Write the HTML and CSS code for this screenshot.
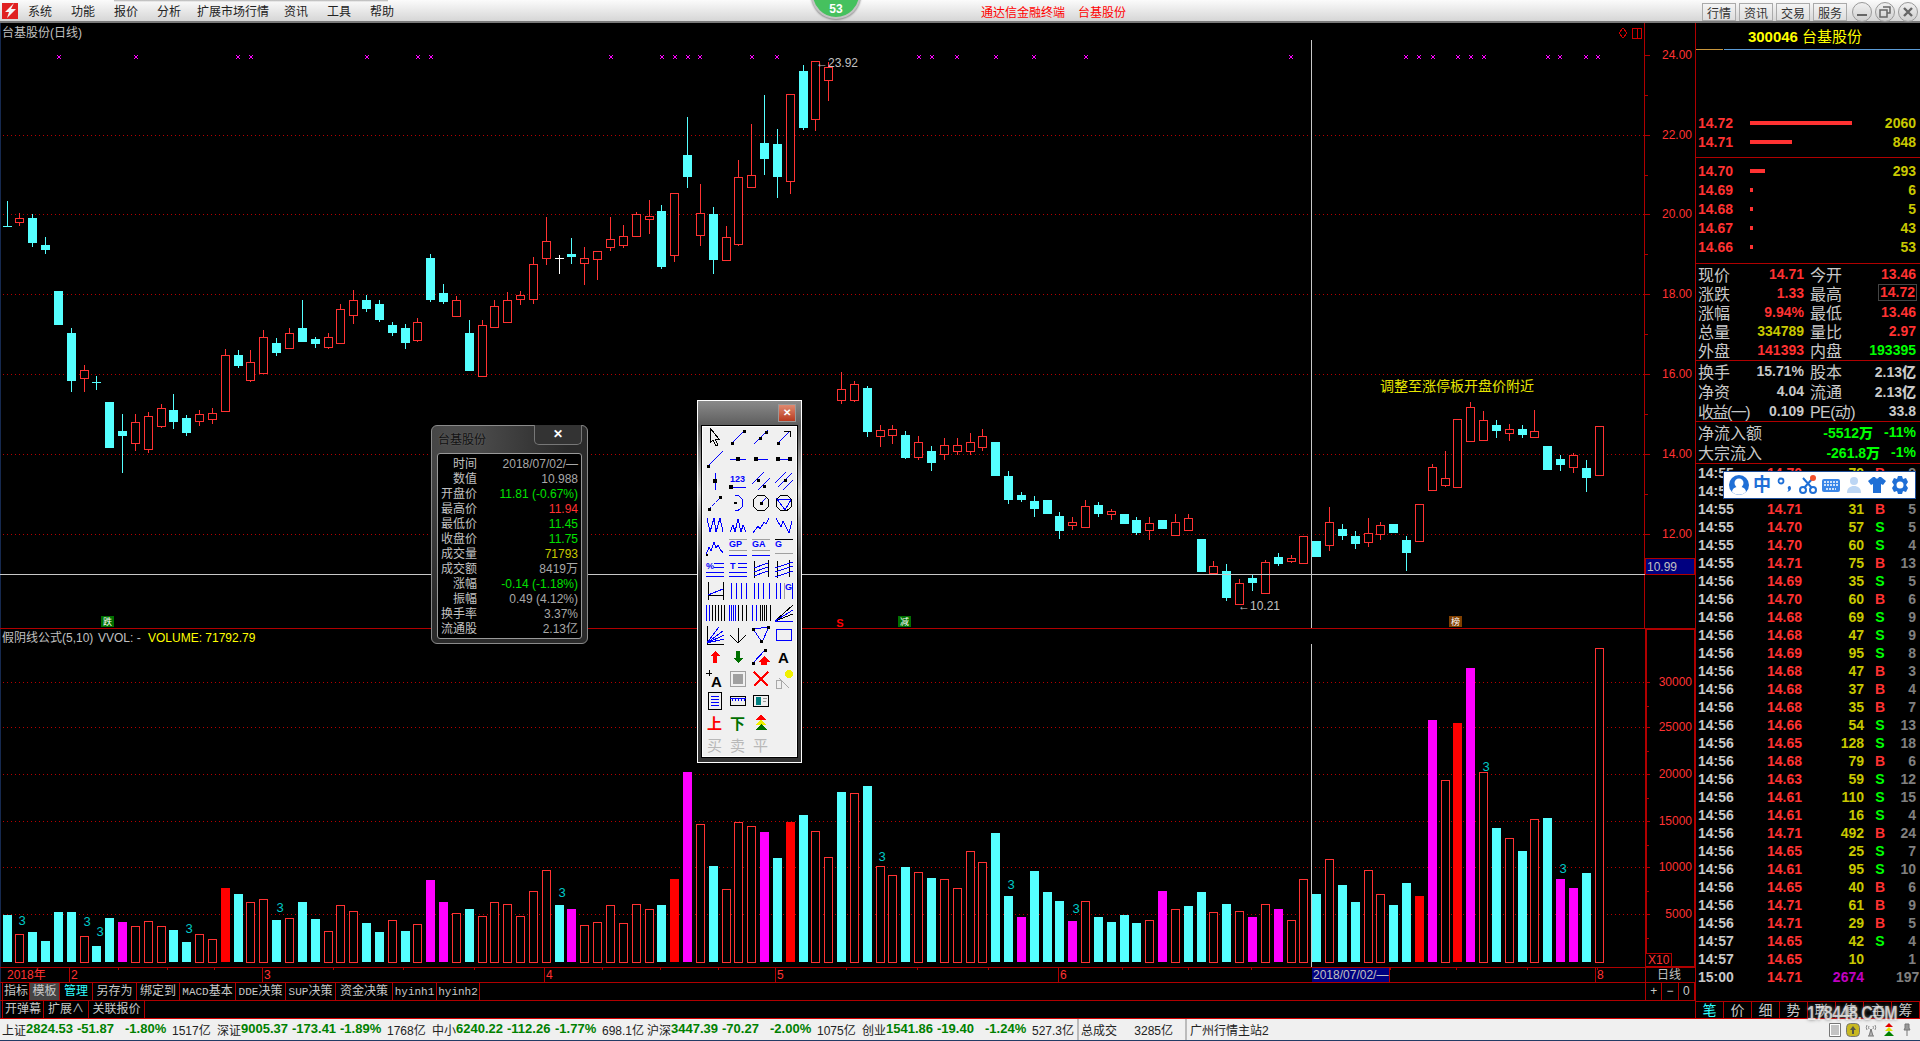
FILE: index.html
```html
<!DOCTYPE html>
<html lang="zh-CN">
<head>
    <meta charset="UTF-8">
    <title>通达信金融终端 台基股份</title>
    <link rel="stylesheet" href="styles.css">
</head>
<body>
    <header class="topbar">
        <svg class="logo" viewBox="0 0 16 16"><rect width="16" height="16" fill="#e02020"/><path d="M12 0 3 9l4 0-2 6 9-9H9l3-6z" fill="#f4f4f4"/></svg>
        <nav class="menu">
            <span>系统</span><span>功能</span><span>报价</span><span>分析</span><span class="menu-wide">扩展市场行情</span><span>资讯</span><span>工具</span><span>帮助</span>
        </nav>
        <div class="menu-shade"></div>
        <div class="badge">53</div>
        <div class="app-title"><span>通达信金融终端</span><span>台基股份</span></div>
        <div class="top-right">
            <button class="top-btn">行情</button><button class="top-btn">资讯</button><button class="top-btn">交易</button><button class="top-btn">服务</button>
            <span class="win-btn"><svg viewBox="0 0 12 12"><path d="M1 9h10" stroke="#666" stroke-width="2"/></svg></span>
            <span class="win-btn"><svg viewBox="0 0 12 12"><path d="M4 1h7v6H8M1 4h7v7H1z" stroke="#666" stroke-width="1.5" fill="none"/></svg></span>
            <span class="win-btn"><svg viewBox="0 0 12 12"><path d="M2 2l8 8M10 2l-8 8" stroke="#666" stroke-width="2.4"/></svg></span>
        </div>
    </header>

    <main class="workspace">
        <section class="charts">
            <svg id="chart" class="chart" viewBox="0 23 1696 960"></svg>
            <div class="tabs tabs-one">
                <span>指标</span><span class="tab-on">模板</span><span class="tab-cyan">管理</span><span>另存为</span><span>绑定到</span><span><i>MACD</i>基本</span><span><i>DDE</i>决策</span><span><i>SUP</i>决策</span><span>资金决策</span><span><i>hyinh1</i></span><span><i>hyinh2</i></span>
                <div class="zoom-btns"><b>+</b><b>−</b><b>0</b></div>
            </div>
            <div class="tabs tabs-two">
                <span>开弹幕</span><span>扩展∧</span><span>关联报价</span>
            </div>
        </section>

        <aside class="side">
            <div class="code-title"><b>300046</b> 台基股份</div>
            <div class="book asks">
                <div class="book-row"><span class="px">14.72</span><i class="lvl" style="width:102px"></i><span class="qty">2060</span></div>
                <div class="book-row"><span class="px">14.71</span><i class="lvl" style="width:42px"></i><span class="qty">848</span></div>
            </div>
            <div class="book bids">
                <div class="book-row"><span class="px">14.70</span><i class="lvl" style="width:15px"></i><span class="qty">293</span></div>
                <div class="book-row"><span class="px">14.69</span><i class="lvl" style="width:3px"></i><span class="qty">6</span></div>
                <div class="book-row"><span class="px">14.68</span><i class="lvl" style="width:3px"></i><span class="qty">5</span></div>
                <div class="book-row"><span class="px">14.67</span><i class="lvl" style="width:3px"></i><span class="qty">43</span></div>
                <div class="book-row"><span class="px">14.66</span><i class="lvl" style="width:3px"></i><span class="qty">53</span></div>
            </div>
            <div class="quotes q-first">
                <div><label>现价</label><b class="up">14.71</b></div><div><label>今开</label><b class="up">13.46</b></div>
                <div><label>涨跌</label><b class="up">1.33</b></div><div><label>最高</label><b class="up boxed">14.72</b></div>
                <div><label>涨幅</label><b class="up">9.94%</b></div><div><label>最低</label><b class="up">13.46</b></div>
                <div><label>总量</label><b class="olive">334789</b></div><div><label>量比</label><b class="up">2.97</b></div>
                <div><label>外盘</label><b class="up">141393</b></div><div><label>内盘</label><b class="down">193395</b></div>
            </div>
            <div class="quotes q-second">
                <div><label>换手</label><b>15.71%</b></div><div><label>股本</label><b>2.13亿</b></div>
                <div><label>净资</label><b>4.04</b></div><div><label>流通</label><b>2.13亿</b></div>
                <div><label class="tight">收益(一)</label><b>0.109</b></div><div><label class="tight-pe">PE(动)</label><b>33.8</b></div>
            </div>
            <div class="flows">
                <div><label>净流入额</label><b>-5512万</b><b class="flow-pct">-11%</b></div>
                <div><label>大宗流入</label><b>-261.8万</b><b class="flow-pct">-1%</b></div>
            </div>
            <div class="ticks">
                <div><span>14:55</span><span>14.70</span><span>79</span><span class="buy">B</span><span>8</span></div>
                <div><span>14:55</span><span>14.70</span><span>43</span><span class="buy">B</span><span>6</span></div>
                <div><span>14:55</span><span>14.71</span><span>31</span><span class="buy">B</span><span>5</span></div>
                <div><span>14:55</span><span>14.70</span><span>57</span><span class="sell">S</span><span>5</span></div>
                <div><span>14:55</span><span>14.70</span><span>60</span><span class="sell">S</span><span>4</span></div>
                <div><span>14:55</span><span>14.71</span><span>75</span><span class="buy">B</span><span>13</span></div>
                <div><span>14:56</span><span>14.69</span><span>35</span><span class="sell">S</span><span>5</span></div>
                <div><span>14:56</span><span>14.70</span><span>60</span><span class="buy">B</span><span>6</span></div>
                <div><span>14:56</span><span>14.68</span><span>69</span><span class="sell">S</span><span>9</span></div>
                <div><span>14:56</span><span>14.68</span><span>47</span><span class="sell">S</span><span>9</span></div>
                <div><span>14:56</span><span>14.69</span><span>95</span><span class="sell">S</span><span>8</span></div>
                <div><span>14:56</span><span>14.68</span><span>47</span><span class="buy">B</span><span>3</span></div>
                <div><span>14:56</span><span>14.68</span><span>37</span><span class="buy">B</span><span>4</span></div>
                <div><span>14:56</span><span>14.68</span><span>35</span><span class="buy">B</span><span>7</span></div>
                <div><span>14:56</span><span>14.66</span><span>54</span><span class="sell">S</span><span>13</span></div>
                <div><span>14:56</span><span>14.65</span><span>128</span><span class="sell">S</span><span>18</span></div>
                <div><span>14:56</span><span>14.68</span><span>79</span><span class="buy">B</span><span>6</span></div>
                <div><span>14:56</span><span>14.63</span><span>59</span><span class="sell">S</span><span>12</span></div>
                <div><span>14:56</span><span>14.61</span><span>110</span><span class="sell">S</span><span>15</span></div>
                <div><span>14:56</span><span>14.61</span><span>16</span><span class="sell">S</span><span>4</span></div>
                <div><span>14:56</span><span>14.71</span><span>492</span><span class="buy">B</span><span>24</span></div>
                <div><span>14:56</span><span>14.65</span><span>25</span><span class="sell">S</span><span>7</span></div>
                <div><span>14:56</span><span>14.61</span><span>95</span><span class="sell">S</span><span>10</span></div>
                <div><span>14:56</span><span>14.65</span><span>40</span><span class="buy">B</span><span>6</span></div>
                <div><span>14:56</span><span>14.71</span><span>61</span><span class="buy">B</span><span>9</span></div>
                <div><span>14:56</span><span>14.71</span><span>29</span><span class="buy">B</span><span>5</span></div>
                <div><span>14:57</span><span>14.65</span><span>42</span><span class="sell">S</span><span>4</span></div>
                <div><span>14:57</span><span>14.65</span><span>10</span><span></span><span>1</span></div>
                <div><span>15:00</span><span>14.71</span><span class="big-vol">2674</span><span></span><span>197</span></div>
            </div>
            <div class="side-tabs">
                <span class="tab-cyan">笔</span><span>价</span><span>细</span><span>势</span><span>联</span><span>值</span><span>主</span><span>筹</span>
            </div>
        </aside>
    </main>

    <footer class="status">
        <div class="idx"><span>上证</span><b>2824.53</b><b>-51.87</b><b>-1.80%</b><span>1517亿</span></div>
        <div class="idx"><span>深证</span><b>9005.37</b><b>-173.41</b><b>-1.89%</b><span>1768亿</span></div>
        <div class="idx"><span>中小</span><b>6240.22</b><b>-112.26</b><b>-1.77%</b><span>698.1亿</span></div>
        <div class="idx"><span>沪深</span><b>3447.39</b><b>-70.27</b><b>-2.00%</b><span>1075亿</span></div>
        <div class="idx"><span>创业</span><b>1541.86</b><b>-19.40</b><b>-1.24%</b><span>527.3亿</span></div>
        <div class="total"><span>总成交</span><span>3285亿</span></div>
        <div class="station">广州行情主站2</div>
        <div class="status-icons">
            <svg viewBox="0 0 14 14"><path d="M1.5.5h11v13h-11z" fill="#fff" stroke="#777"/><path d="M3 3h8M3 5h8M3 7h8M3 9h8M3 11h8" stroke="#888"/></svg>
            <svg viewBox="0 0 14 14"><rect x=".5" y=".5" width="13" height="13" rx="4" fill="#c8b820" stroke="#777"/><path d="M7 3 4 7h2v4h2V7h2z" fill="#554"/></svg>
            <svg viewBox="0 0 14 14"><path d="M7 6v7M4 13h6M5 13l2-7 2 7" stroke="#777" fill="none"/><path d="M3 2a5 5 0 0 0 0 5M11 2a5 5 0 0 1 0 5M5 3a3 3 0 0 0 0 3M9 3a3 3 0 0 1 0 3" stroke="#888" fill="none"/></svg>
            <svg viewBox="0 0 14 14"><path d="M7 0l4 4H3z" fill="#e00000"/><path d="M7 4l4 4H3z" fill="#e0e000"/><path d="M7 8l5 5H2z" fill="#008000"/></svg>
            <svg viewBox="0 0 14 14"><path d="M5 1h4v4l1 2H4l1-2zM7 7v6" fill="#999" stroke="#777"/></svg>
        </div>
    </footer>

    <div class="watermark">178448.COM</div>

    <!-- K线信息窗口 -->
    <div class="info-win">
        <div class="info-title">台基股份</div>
        <div class="info-close">✕</div>
        <div class="info-body">
            <span>时间</span><span>2018/07/02/—</span>
            <span>数值</span><span>10.988</span>
            <span>开盘价</span><span class="i-down">11.81 (-0.67%)</span>
            <span>最高价</span><span class="i-up">11.94</span>
            <span>最低价</span><span class="i-down">11.45</span>
            <span>收盘价</span><span class="i-down">11.75</span>
            <span>成交量</span><span class="i-vol">71793</span>
            <span>成交额</span><span>8419万</span>
            <span>涨幅</span><span class="i-down">-0.14 (-1.18%)</span>
            <span>振幅</span><span>0.49 (4.12%)</span>
            <span>换手率</span><span>3.37%</span>
            <span>流通股</span><span>2.13亿</span>
        </div>
    </div>

    <!-- 画线工具 -->
    <div class="tool-win">
        <div class="tool-close">✕</div>
        <div class="tool-grid">
            <svg viewBox="0 0 20 20"><path class="k" d="M5 1v15l3-3 3 6 2-1-3-6h4z" fill="#fff"/></svg>
            <svg viewBox="0 0 20 20"><path class="b" d="M4 16 16 4"/><path class="d" d="M3 15h3v3H3zM15 3h3v3h-3z"/></svg>
            <svg viewBox="0 0 20 20"><path class="b" d="M3 17 17 3"/><path class="d" d="M8 10h3v3H8zM14 4h3v3h-3z"/></svg>
            <svg viewBox="0 0 20 20"><path class="b" d="M4 16 16 4"/><path class="k" d="M10 4h6v6"/><path class="d" d="M3 15h3v3H3z"/></svg>

            <svg viewBox="0 0 20 20"><path class="b" d="M2 18 18 2"/><path class="d" d="M2 16h3v3H2z"/></svg>
            <svg viewBox="0 0 20 20"><path class="b" d="M2 10h16"/><path class="d" d="M8 8h4v4H8z"/></svg>
            <svg viewBox="0 0 20 20"><path class="b" d="M3 10h14"/><path class="d" d="M3 8h4v4H3z"/></svg>
            <svg viewBox="0 0 20 20"><path class="b" d="M3 10h14"/><path class="d" d="M2 8h4v4H2zM14 8h4v4h-4z"/></svg>

            <svg viewBox="0 0 20 20"><path class="b" d="M10 2v17"/><path class="d" d="M8 8h4v4H8z"/></svg>
            <svg viewBox="0 0 20 20"><text class="ti" x="2" y="11">123</text><path class="b" d="M3 16h15"/><path class="d" d="M1 14h4v4H1z"/></svg>
            <svg viewBox="0 0 20 20"><path class="b" d="M1 13 13 1M7 19 19 7"/><path class="d" d="M6 8h3v3H6zM12 14h3v3h-3z"/></svg>
            <svg viewBox="0 0 20 20"><path class="b" d="M1 12 12 1M4 16 18 2M9 19 19 9"/><path class="d" d="M10 8h3v3h-3z"/></svg>

            <svg viewBox="0 0 20 20"><path class="b" d="M3 17 17 3" stroke-dasharray="4 2"/><path class="d" d="M3 15h3v3H3zM14 3h3v3h-3z"/></svg>
            <svg viewBox="0 0 20 20"><path class="b" d="M7 2a8 8 0 0 1 8 8 8 8 0 0 1-8 8"/><path class="d" d="M6 9h3v2H6z"/></svg>
            <svg viewBox="0 0 20 20"><circle class="k" cx="10" cy="10" r="8"/><path class="b" d="M10 10l5-5"/><path class="d" d="M9 9h3v3H9z"/></svg>
            <svg viewBox="0 0 20 20"><circle class="k" cx="10" cy="10" r="8"/><path class="b" d="M3 6l14 1-6 10z"/></svg>

            <svg viewBox="0 0 20 20"><path class="b" d="M2 3l3 14 4-14 2 14 4-14 3 14"/></svg>
            <svg viewBox="0 0 20 20"><path class="b" d="M2 17l3-7 2 7 3-13 3 13 2-7 3 7"/></svg>
            <svg viewBox="0 0 20 20"><path class="b" d="M2 18l5-7 2 3 4-7 2 2 3-6"/></svg>
            <svg viewBox="0 0 20 20"><path class="b" d="M2 3l5 9 2-6 6 12 3-12"/></svg>

            <svg viewBox="0 0 20 20"><path class="b" d="M1 18l3-8 2 4 3-9 2 6 2-3 2 4 3 4"/><path class="d" d="M1 17h2v2H1z"/></svg>
            <svg viewBox="0 0 20 20"><text class="ti" x="1" y="10">GP</text><path class="b" d="M1 18h18"/><path class="k g" d="M1 2h18M1 13h18"/></svg>
            <svg viewBox="0 0 20 20"><text class="ti" x="1" y="10">GA</text><path class="b" d="M1 18h18"/><path class="k g" d="M1 2h18M1 13h18"/></svg>
            <svg viewBox="0 0 20 20"><text class="ti" x="1" y="10">G</text><path class="k" d="M1 2h18"/><path class="k g" d="M1 16h18"/></svg>

            <svg viewBox="0 0 20 20"><text class="ti" x="1" y="10">%</text><path class="b" d="M9 4h10M9 8h10M1 13h18M1 17h18"/></svg>
            <svg viewBox="0 0 20 20"><text class="ti" x="2" y="10">T</text><path class="b" d="M10 4h9M10 8h9M1 13h18M1 17h18"/></svg>
            <svg viewBox="0 0 20 20"><path class="k" d="M3 2v17M17 1v17"/><path class="b" d="M3 9l14-5M3 13l14-5M3 17l14-5"/></svg>
            <svg viewBox="0 0 20 20"><path class="k" d="M3 2v17M15 1v17"/><path class="b" d="M1 9l18-6M1 13l18-6M1 18l18-6"/></svg>

            <svg viewBox="0 0 20 20"><path class="k" d="M3 1v18M3 14h15M18 1v18"/><path class="b" d="M3 14l15-6"/></svg>
            <svg viewBox="0 0 20 20"><path class="b" d="M3 2v16M8 2v16M13 2v16M18 2v16"/></svg>
            <svg viewBox="0 0 20 20"><path class="b" d="M3 2v16M7 2v16M12 2v16M18 2v16"/></svg>
            <svg viewBox="0 0 20 20"><path class="b" d="M2 2v16M6 2v16"/><path class="k g" d="M10 2v16"/><path class="b" d="M18 2v16"/><text class="ti" x="11" y="9">G</text></svg>

            <svg viewBox="0 0 20 20"><path class="b" d="M1 2v16M4 2v16"/><path class="k" d="M7 2v16M10 2v16M13 2v16M16 2v16M19 2v16"/></svg>
            <svg viewBox="0 0 20 20"><path class="b" d="M1 2v16M3 2v16M5 2v16M7 2v16"/><path class="k" d="M10 2v16M14 2v16M18 2v16"/></svg>
            <svg viewBox="0 0 20 20"><path class="b" d="M1 2v16M5 2v16"/><path class="k" d="M9 2v16M11 2v16M13 2v16M15 2v16M19 2v16"/></svg>
            <svg viewBox="0 0 20 20"><path class="k" d="M1 18 19 2M1 18l18-7"/><path class="b" d="M1 18 19 7M1 18h18"/></svg>

            <svg viewBox="0 0 20 20"><path class="k" d="M2 1v18h17"/><path class="b" d="M2 18 14 2M2 18 18 6M2 18l17-8M2 18l17-4"/></svg>
            <svg viewBox="0 0 20 20"><path class="k" d="M10 3v15M2 10l8 8 8-8"/></svg>
            <svg viewBox="0 0 20 20"><path class="b" d="M2 4l16-2-7 15z"/><path class="d" d="M1 3h3v3H1zM16 1h3v3h-3zM9 15h3v3H9z"/></svg>
            <svg viewBox="0 0 20 20"><path class="b" d="M2.5 4.5h15v11h-15z"/></svg>

            <svg viewBox="0 0 20 20"><path d="M10 4l5 5h-3v7H8V9H5z" fill="#ff0000"/></svg>
            <svg viewBox="0 0 20 20"><path d="M8 4h4v7h3l-5 5-5-5h3z" fill="#007000"/></svg>
            <svg viewBox="0 0 20 20"><path class="b" d="M2 16 14 3"/><path class="d" d="M1 15h3v3H1zM13 2h3v3h-3z"/><path d="M13 9l6 6h-3v3h-6v-3H7z" fill="#ff0000"/></svg>
            <svg viewBox="0 0 20 20"><text class="ta" x="4" y="16">A</text></svg>

            <svg viewBox="0 0 20 20"><text class="ta" x="6" y="18">A</text><path class="k" d="M1 4h6M4 1v6"/></svg>
            <svg viewBox="0 0 20 20"><path d="M2.5 2.5h15v15h-15z" fill="#f0f0f0" stroke="#a0a0a0"/><path d="M5 5h10v10H5z" fill="#a0a0a0"/></svg>
            <svg viewBox="0 0 20 20"><path d="M3 3l14 14M17 3 3 17" stroke="#ff0000" stroke-width="1.6" fill="none"/></svg>
            <svg viewBox="0 0 20 20"><path d="M2 11h5v8H2zM5 9l10 10" stroke="#a8a8a8" fill="none"/><circle cx="15" cy="5" r="4" fill="#f0f000"/></svg>

            <svg viewBox="0 0 20 20"><path class="k" d="M3.500 1.500h13v17h-13z"/><path class="b" d="M6 5h8M6 8h8M6 11h8M6 14h8"/></svg>
            <svg viewBox="0 0 20 20"><path class="k" d="M2.500 5.500h15v9h-15z"/><path class="b" d="M2 7h16M4 7v3M7 7v3M10 7v3M13 7v3M16 7v3"/></svg>
            <svg viewBox="0 0 20 20"><path class="k" d="M2.500 4.500h15v11h-15z"/><path d="M5 6h5v8H5z" fill="#008080"/><path d="M12 7h4M12 10h3" stroke="#999"/></svg>
            <span></span>

            <span class="tool-up">上</span><span class="tool-dn">下</span>
            <svg viewBox="0 0 20 20"><path d="M10 1l5 6H5z" fill="#ff0000"/><path d="M10 6l5 6H5z" fill="#f0f000"/><path d="M10 11l6 6H4z" fill="#007000"/></svg>
            <span></span>

            <span class="tool-off">买</span><span class="tool-off">卖</span><span class="tool-off">平</span><span></span>
        </div>
    </div>

    <!-- 输入法工具条 -->
    <div class="ime">
        <svg viewBox="0 0 20 20"><circle cx="10" cy="10" r="10" fill="#1f6fd6"/><circle cx="10" cy="8" r="4.500" fill="#fff"/><path d="M3 17c1-5 4-5 7-5s6 0 7 5a10 10 0 0 1-14 0z" fill="#fff"/></svg>
        <span class="ime-zh">中</span>
        <svg viewBox="0 0 20 20"><circle cx="6" cy="6" r="2.500" fill="none" stroke="#1f6fd6" stroke-width="1.800"/><path d="M15 11c2 2 1 5-3 6 1-1 2-2 1-3a2 2 0 0 1 2-3z" fill="#1f6fd6"/></svg>
        <svg viewBox="0 0 20 20"><circle cx="5" cy="15" r="3" fill="none" stroke="#1f6fd6" stroke-width="2"/><circle cx="15" cy="15" r="3" fill="none" stroke="#1f6fd6" stroke-width="2"/><path d="M6 13 15 3M14 13 5 3" stroke="#1f6fd6" stroke-width="2"/><circle cx="15" cy="3" r="3" fill="#f4502a"/></svg>
        <svg viewBox="0 0 20 20"><rect x="1" y="4" width="18" height="13" rx="2" fill="#3a86e8"/><path d="M3 7h14M3 10h14M5 14h10" stroke="#fff" stroke-width="1.500" stroke-dasharray="2 1"/></svg>
        <svg viewBox="0 0 20 20"><circle cx="10" cy="6" r="4" fill="#bcd6f4"/><path d="M3 18c0-5 3-7 7-7s7 2 7 7z" fill="#bcd6f4"/></svg>
        <svg viewBox="0 0 20 20"><path d="M6 2h2c1 2 3 2 4 0h2l5 4-3 4-2-1v9H6V9l-2 1-3-4z" fill="#1f6fd6"/></svg>
        <svg viewBox="0 0 20 20"><path d="M8 1h4l1 3 3-1 2 4-2 3 2 3-2 4-3-1-1 3H8l-1-3-3 1-2-4 2-3-2-3 2-4 3 1z" fill="#1f6fd6"/><circle cx="10" cy="10" r="3.500" fill="#fff"/></svg>
    </div>

    <script src="chart.js"></script>
</body>
</html>
```

FILE: styles.css
```css
* {
    box-sizing: border-box;
}
html, body {
    margin: 0;
    height: 100%;
    overflow: hidden;
    background-color: #000;
}
body {
    position: relative;
    display: flex;
    flex-direction: column;
    width: 1920px;
    height: 1041px;
    font-family: "Liberation Sans", "Noto Sans CJK SC", sans-serif;
    font-size: 12px;
    box-shadow: inset 1px 0 #16294f;
}

/* top bar */
.topbar {
    position: relative;
    display: flex;
    align-items: center;
    flex: 0 0 23px;
    background: linear-gradient(#fbfbfb, #d6d6d6);
    border-bottom: 2px solid #7a7a7a;
    color: #222;
}
.logo {
    width: 16px;
    height: 16px;
    margin-left: 2px;
}
.menu {
    display: flex;
    gap: 19px;
    margin-left: 10px;
}
.menu-wide {
    margin: 0 -4px 0 -3px;
}
.menu-shade {
    position: absolute;
    left: 114px;
    top: 0;
    width: 274px;
    height: 2px;
    background: linear-gradient(#b0b0b0, transparent);
}
.badge {
    position: absolute;
    left: 811px;
    top: -31px;
    width: 50px;
    height: 50px;
    padding-top: 31px;
    border-radius: 50%;
    border: 2px solid #c4c4c4;
    background-color: #46c15e;
    color: #fff;
    font-weight: bold;
    font-size: 12px;
    text-align: center;
    line-height: 14px;
    box-shadow: 0 1px 2px #888;
}
.app-title {
    position: absolute;
    left: 981px;
    top: 3px;
    display: flex;
    gap: 13px;
    color: #f00;
}
.top-right {
    position: absolute;
    left: 1702px;
    top: 2px;
    display: flex;
    gap: 3px;
    align-items: center;
}
.top-btn {
    width: 34px;
    height: 18px;
    padding: 0;
    border: 1px solid #aaa;
    background: linear-gradient(#f4f4f4, #ddd);
    color: #333;
    font: 12px "Noto Sans CJK SC", sans-serif;
    line-height: 15px;
}
.win-btn {
    display: flex;
    align-items: center;
    justify-content: center;
    width: 20px;
    height: 20px;
    border-radius: 50%;
    border: 1px solid #999;
    background: linear-gradient(#f0f0f0, #cfcfcf);
}
.top-btn + .win-btn {
    margin-left: 2px;
}
.win-btn svg {
    width: 12px;
    height: 12px;
}

/* main area */
.workspace {
    display: flex;
    flex: 0 0 995px;
}
.charts {
    display: flex;
    flex-direction: column;
    width: 1695px;
}
.chart {
    display: block;
    width: 1696px;
    height: 960px;
    flex: none;
    shape-rendering: crispEdges;
}
.tabs {
    display: grid;
    position: relative;
    align-items: stretch;
    color: #c8c8c8;
    border-bottom: 1px solid #b00000;
    padding-left: 2px;
    line-height: 16px;
}
.tabs-one {
    height: 18px;
    grid-template-columns: 28px 30px 33px 44px 43px 56px 50px 50px 57px 44px 43px;
}
.tabs-two {
    height: 17px;
    grid-template-columns: 42px 45px 56px;
    border-bottom: 0;
}
.tabs span {
    border-right: 1px solid #b00000;
    text-align: center;
    white-space: nowrap;
}
.tabs span:first-child {
    border-left: 1px solid #b00000;
}
.tabs i {
    font: 11px "Liberation Mono", monospace;
}
.tabs .tab-on {
    background-color: #444;
}
.tab-cyan {
    color: #30ffff;
}
.zoom-btns {
    position: absolute;
    right: 0;
    top: 0;
    bottom: 0;
    display: flex;
    width: 50px;
    border-left: 1px solid #b00000;
}
.zoom-btns b {
    flex: 1;
    font-weight: normal;
    text-align: center;
    border-right: 1px solid #b00000;
}

/* right panel */
.side {
    display: flex;
    flex-direction: column;
    width: 225px;
    border-left: 1px solid #b00000;
    font-weight: bold;
    font-size: 14px;
}
.code-title {
    height: 27px;
    padding: 4px 6px 0 0;
    text-align: center;
    color: #ff0;
    font-size: 15px;
    font-weight: normal;
    line-height: 20px;
    background: linear-gradient(90deg, #c8963c 27px, #000 27px, #000 28px, #5b9bd5 28px) bottom / 100% 1px no-repeat;
}
.book {
    padding: 0 4px 0 2px;
    border-bottom: 1px solid #b00000;
}
.asks {
    height: 108px;
    padding-top: 63px;
}
.bids {
    height: 106px;
    padding-top: 3px;
}
.book-row {
    display: flex;
    align-items: center;
    height: 19px;
    color: #ff3232;
}
.px {
    width: 52px;
}
.lvl {
    height: 4px;
    background-color: #ff3232;
}
.qty {
    margin-left: auto;
    color: #c8c800;
}
.quotes {
    display: grid;
    grid-template-columns: 106px 106px;
    column-gap: 6px;
    padding: 0 4px 0 2px;
    color: #c8c8c8;
    border-bottom: 1px solid #b00000;
}
.q-first {
    height: 97px;
}
.q-second {
    height: 61px;
}
.quotes div,
.flows div {
    display: flex;
    align-items: center;
    justify-content: space-between;
    height: 19px;
    white-space: nowrap;
}
.side label {
    font-size: 16px;
    font-weight: normal;
    color: #c8c8c8;
}
.side .tight {
    letter-spacing: -1.5px;
}
.side .tight-pe {
    letter-spacing: -0.6px;
}
.up {
    color: #ff3232;
}
.down {
    color: #00ff00;
}
.olive {
    color: #c8c800;
}
.boxed {
    margin-right: -1px;
    padding: 0 1px;
    border: 1px solid #444;
    line-height: 15px;
}
.flows {
    height: 42px;
    padding: 0 4px 0 2px;
    color: #00ff00;
    border-bottom: 1px solid #b00000;
}
.flows div {
    height: 20px;
}
.flows label {
    flex: 1;
}
.flow-pct {
    margin-left: 11px;
}
.ticks {
    flex: 1;
    padding: 0 4px 0 2px;
}
.ticks div {
    display: grid;
    grid-template-columns: 69px 42px 55px 32px 20px;
    height: 18px;
    line-height: 18px;
}
.ticks span:nth-child(1) {
    color: #c8c8c8;
}
.ticks span:nth-child(2) {
    color: #ff3232;
}
.ticks span:nth-child(3) {
    color: #c8c800;
    text-align: right;
}
.ticks span:nth-child(4) {
    text-align: center;
}
.ticks span:nth-child(5) {
    color: #808080;
    text-align: right;
}
.ticks span.big-vol {
    color: #c000c0;
}
.ticks .buy {
    color: #ff3232;
}
.ticks .sell {
    color: #00ff00;
}
.side-tabs {
    display: grid;
    grid-template-columns: repeat(8, 28px);
    height: 17px;
    border-top: 1px solid #b00000;
    color: #c8c8c8;
    font-size: 14px;
    font-weight: normal;
    line-height: 16px;
    text-align: center;
}
.side-tabs span {
    border-right: 1px solid #b00000;
}

/* status bar */
.status {
    display: flex;
    align-items: center;
    flex: 0 0 23px;
    padding-left: 2px;
    background-color: #f0f0f0;
    border-top: 1px solid #d00000;
    border-bottom: 1px solid #223c66;
    color: #222;
    font-size: 12px;
    white-space: nowrap;
}
.idx {
    display: grid;
    grid-template-columns: 24px 51px 48px 47px 45px;
    width: 215px;
}
.idx b {
    color: #008000;
    font-size: 13px;
}
.total {
    display: flex;
    justify-content: space-between;
    width: 108px;
    height: 21px;
    padding: 2px 12px 0 2px;
    border-left: 2px solid #bbb;
}
.station {
    height: 21px;
    padding: 2px 0 0 3px;
    border-left: 2px solid #bbb;
}
.status-icons {
    display: flex;
    gap: 4px;
    margin-left: auto;
    margin-right: 6px;
}
.status-icons svg {
    width: 14px;
    height: 14px;
}
.watermark {
    position: absolute;
    left: 1807px;
    top: 1005px;
    color: rgba(255, 255, 255, 0.72);
    font-size: 16px;
    font-weight: bold;
    letter-spacing: -0.5px;
    text-shadow: 0 0 3px #777;
    transform: scaleY(1.25);
}

/* chart text */
.chart text {
    font-family: "Liberation Sans", "Noto Sans CJK SC", sans-serif;
    font-size: 12px;
    fill: #c0c0c0;
}
.chart .axis-text {
    fill: #ff3232;
    text-anchor: end;
}
.chart .date-text {
    fill: #ff3232;
}
.chart .vol-title {
    fill: #ff0;
}
.chart .note {
    fill: #e6e600;
    font-size: 14px;
}
.chart .three {
    fill: #00c8c8;
    font-size: 13px;
    text-anchor: middle;
}
.chart .flag {
    font-size: 9px;
    fill: #fff;
    text-anchor: middle;
}
.chart .flag-s {
    font-size: 11px;
    font-weight: bold;
    fill: #f00;
    text-anchor: middle;
}

/* info window */
.info-win {
    position: absolute;
    left: 431px;
    top: 425px;
    width: 157px;
    height: 219px;
    padding: 27px 5px 0;
    border: 1px solid #8a8a8a;
    border-radius: 6px;
    background: radial-gradient(ellipse at 30px 12px, #4a4a4a 10%, #2a2a2a 60%);
    color: #c0c0c0;
}
.info-title {
    position: absolute;
    left: 6px;
    top: 4px;
    color: #111;
    text-shadow: 0 0 2px #666;
}
.info-close {
    position: absolute;
    right: 5px;
    top: -1px;
    width: 48px;
    height: 20px;
    border: 1px solid #777;
    border-top: 0;
    border-radius: 0 0 5px 5px;
    background-color: #333;
    color: #fff;
    font-weight: bold;
    text-align: center;
    line-height: 18px;
}
.info-body {
    display: grid;
    grid-template-columns: 38px 1fr;
    grid-auto-rows: 15px;
    height: 186px;
    padding: 3px 3px 0 1px;
    border: 1px solid #999;
    border-radius: 3px;
    background-color: #000;
    line-height: 15px;
}
.info-body span {
    white-space: nowrap;
}
.info-body span:nth-child(odd) {
    text-align: right;
}
.info-body span:nth-child(even) {
    text-align: right;
    color: #a8a8a8;
}
.info-body span.i-down {
    color: #00e000;
}
.info-body span.i-up {
    color: #ff3232;
}
.info-body span.i-vol {
    color: #c8c800;
}

/* drawing tools window */
.tool-win {
    position: absolute;
    left: 697px;
    top: 400px;
    width: 105px;
    height: 363px;
    padding: 24px 3px 3px;
    border: 1px solid #fff;
    background: linear-gradient(#8a8a8a, #5c5c5c 25px, #c0c0c0 90px, #333 180px);
}
.tool-close {
    position: absolute;
    right: 5px;
    top: 3px;
    width: 18px;
    height: 18px;
    border: 1px solid #999;
    background: linear-gradient(#e08a70, #b83a20);
    color: #fff;
    font-size: 10px;
    font-weight: bold;
    line-height: 16px;
    text-align: center;
}
.tool-grid {
    display: grid;
    grid-template-columns: repeat(4, 23px);
    grid-auto-rows: 22px;
    height: 333px;
    padding-left: 1px;
    border: 1px solid #000;
    outline: 1px solid #fff;
    outline-offset: -2px;
    background-color: #f0f0f0;
    justify-items: center;
    align-items: center;
    font-family: "Noto Sans CJK SC", sans-serif;
    font-size: 15px;
    font-weight: bold;
    line-height: 20px;
}
.tool-grid svg {
    width: 20px;
    height: 20px;
    shape-rendering: crispEdges;
}
.tool-grid .b,
.tool-grid .k {
    fill: none;
    stroke: #0000ff;
}
.tool-grid .k {
    stroke: #000;
}
.tool-grid .g {
    stroke: #a0a0a0;
}
.tool-grid .d {
    fill: #000;
}
.tool-grid .ti {
    font-family: "Liberation Sans", sans-serif;
    font-size: 9px;
    font-weight: bold;
    fill: #0000ff;
}
.tool-grid .ta {
    font-family: "Liberation Sans", sans-serif;
    font-size: 15px;
    font-weight: bold;
    fill: #000;
}
.tool-up {
    color: #f00;
}
.tool-dn {
    color: #007000;
}
.tool-off {
    color: #b8b8b8;
    font-weight: normal;
}

/* ime toolbar */
.ime {
    position: absolute;
    left: 1723px;
    top: 471px;
    display: flex;
    align-items: center;
    gap: 3px;
    width: 193px;
    height: 28px;
    padding-left: 5px;
    border: 1px solid #1f4f9a;
    background-color: #fff;
}
.ime svg {
    width: 20px;
    height: 20px;
}
.ime-zh {
    width: 20px;
    color: #1f6fd6;
    font-size: 18px;
    font-weight: bold;
    line-height: 20px;
    text-align: center;
}
```

FILE: chart.js
```js
const RED = '#ff3232', CYAN = '#55ffff', MAGENTA = '#ff00ff', AXIS = '#b00000';

// [high, body top, body bottom, low, colour] in screen y
const candles = [
    [201,226,227,226,'c'],[213,218,222,226,'r'],[214,218,243,247,'c'],[237,245,250,254,'c'],[291,291,325,325,'c'],
    [328,333,381,392,'c'],[365,370,378,392,'r'],[376,382,383,390,'c'],[402,402,448,448,'c'],[414,431,436,473,'c'],
    [414,422,443,451,'r'],[412,416,449,453,'r'],[404,408,426,428,'r'],[394,410,422,429,'c'],[415,418,433,436,'c'],
    [410,414,421,426,'r'],[408,413,419,424,'r'],[349,355,411,411,'r'],[350,355,366,368,'c'],[350,362,380,382,'r'],
    [330,337,373,373,'r'],[338,343,353,356,'c'],[328,333,348,348,'r'],[300,328,342,342,'c'],[337,339,344,348,'c'],
    [333,337,347,349,'r'],[304,309,343,343,'r'],[290,300,315,324,'r'],[295,300,309,312,'c'],[300,304,320,322,'c'],
    [322,325,333,336,'c'],[324,328,343,349,'c'],[318,322,340,342,'r'],[254,258,300,302,'c'],[284,293,302,304,'c'],
    [296,300,316,316,'r'],[320,333,371,371,'c'],[320,325,376,376,'r'],[300,306,327,327,'r'],[292,300,322,322,'r'],
    [291,295,299,305,'r'],[257,264,299,304,'r'],[217,241,258,265,'r'],[255,258,259,274,'w'],[238,254,257,264,'c'],
    [247,258,263,285,'r'],[251,251,259,280,'r'],[217,239,247,251,'r'],[225,236,245,248,'r'],[212,214,236,236,'r'],
    [200,216,219,234,'r'],[205,211,267,269,'c'],[193,193,255,262,'r'],[117,155,177,188,'c'],[184,213,235,246,'r'],
    [207,214,260,274,'c'],[226,237,260,260,'r'],[160,177,244,246,'r'],[124,175,187,187,'r'],[95,143,159,175,'c'],
    [129,144,177,198,'c'],[94,94,181,194,'r'],[65,71,128,130,'c'],[61,61,119,131,'r'],[62,67,80,101,'r'],
    [372,389,400,404,'r'],[381,384,400,402,'r'],[386,388,432,437,'c'],[425,430,436,447,'r'],[425,429,435,444,'r'],
    [431,435,458,459,'c'],[436,442,457,460,'r'],[446,451,463,471,'c'],[438,445,454,460,'r'],[438,445,451,455,'r'],
    [433,442,451,455,'r'],[429,436,447,451,'r'],[442,442,476,476,'c'],[471,476,500,504,'c'],[492,495,500,502,'c'],
    [496,501,509,517,'c'],[500,500,514,514,'c'],[512,516,531,539,'c'],[517,522,525,530,'r'],[500,506,527,527,'r'],
    [502,505,514,517,'c'],[509,511,514,520,'r'],[514,514,524,524,'c'],[517,520,533,535,'c'],[517,523,530,540,'r'],
    [520,520,529,529,'c'],[514,522,535,536,'r'],[514,518,530,530,'r'],[539,539,572,572,'c'],[561,566,573,573,'r'],
    [564,571,598,601,'c'],[579,583,604,604,'r'],[574,578,583,591,'c'],[560,562,593,594,'r'],[553,557,564,566,'c'],
    [555,558,561,563,'r'],[536,536,563,563,'r'],[541,541,557,557,'c'],[507,522,545,551,'r'],[524,529,536,540,'c'],
    [531,536,544,549,'c'],[518,533,542,547,'r'],[522,525,534,540,'r'],[524,524,533,533,'c'],[536,540,553,571,'c'],
    [504,504,541,541,'r'],[464,467,490,490,'r'],[451,478,485,487,'r'],[419,419,487,487,'r'],[402,407,441,441,'r'],
    [411,420,440,440,'r'],[420,425,431,438,'c'],[424,429,433,441,'r'],[425,429,435,438,'c'],[410,431,437,438,'r'],
    [446,446,470,470,'c'],[455,459,465,471,'c'],[453,455,467,473,'r'],[460,468,478,492,'c'],[426,426,475,475,'r']
];

// volume bar tops in screen y, kinds: c cyan, r red outline, s solid red, m magenta
const volTops = [
    915,934,932,941,912,912,936,946,918,922, 926,921,926,930,942,934,939,888,894,902,
    899,920,918,902,919,931,905,911,923,932, 920,931,924,880,902,913,909,916,902,904,
    916,891,870,905,909,925,922,905,923,904, 909,905,879,772,824,866,889,822,826,832,
    858,822,815,831,857,792,793,786,866,875, 867,872,878,879,888,851,862,833,896,917,
    871,892,901,921,901,917,922,915,923,920, 891,909,906,892,912,904,911,917,904,909,
    920,879,894,859,885,902,870,894,905,883, 896,720,780,723,668,772,828,838,851,819,
    818,879,888,873,648
];
const volKinds = 'crccccrccmrrrccrrscrrcrccrrrccrcrmmrcrrrrrrcmrrrrrrcsmrcrrrmcscrrcrcrrcrcrrrrccmcccmrccccrmrccrcrmrmrrcrccrrccsmrsmrcrcrcmmcr';

const signalDays = [59,136,238,251,367,418,431,611,662,675,688,700,752,777,919,932,957,996,1034,1086,1291,1406,1419,1433,1458,1471,1484,1548,1560,1586,1598];
const threes = [[22,925],[87,926],[100,936],[189,933],[280,912],[562,897],[882,861],[1011,889],[1076,913],[1486,771],[1563,873]];
const dateTicks = [69,118,167,214,262,333,403,474,544,602,660,718,775,846,917,988,1058,1122,1188,1251,1390,1456,1527,1597];
const dateLabels = [[71,'2'],[264,'3'],[546,'4'],[777,'5'],[1060,'6'],[1597,'8']];
const priceAxis = [[55,'24.00'],[135,'22.00'],[214,'20.00'],[294,'18.00'],[374,'16.00'],[454,'14.00'],[534,'12.00']];
const volAxis = [[682,'30000'],[727,'25000'],[774,'20000'],[821,'15000'],[867,'10000'],[914,'5000']];

function barX(i) {
    return Math.round(6.5 + 12.84 * i);
}

function line(x1, y1, x2, y2, color, extra) {
    return `<line x1="${x1}" y1="${y1}" x2="${x2}" y2="${y2}" stroke="${color}" ${extra || ''}/>`;
}

function text(x, y, str, cls) {
    return `<text x="${x}" y="${y}"${cls ? ` class="${cls}"` : ''}>${str}</text>`;
}

function drawBody(x, top, bottom, kind) {
    if (kind === 'r') {
        return `<rect x="${x - 4}" y="${top}" width="8" height="${Math.max(bottom - top, 1)}" fill="#000" stroke="${RED}"/>`;
    }
    const color = { c: CYAN, m: MAGENTA, s: '#ff0000', w: '#fff' }[kind];
    return `<rect x="${x - 4.5}" y="${top}" width="9" height="${Math.max(bottom - top, 1)}" fill="${color}"/>`;
}

function drawChart() {
    const out = [];

    // grid
    priceAxis.slice(1).forEach(([y]) => out.push(line(3, y, 1645, y, '#b80000', 'stroke-dasharray="1 3"')));
    volAxis.forEach(([y]) => out.push(line(3, y, 1645, y, '#b80000', 'stroke-dasharray="1 3"')));

    // volume bars
    volTops.forEach((top, i) => out.push(drawBody(barX(i), top, 962, volKinds[i])));

    // candles
    candles.forEach(([hi, top, bottom, lo, kind], i) => {
        const x = barX(i);
        const color = { r: RED, c: CYAN, w: '#fff' }[kind];
        out.push(line(x + 0.5, hi, x + 0.5, lo, color));
        out.push(drawBody(x, top, bottom, kind));
    });

    signalDays.forEach(x => {
        out.push(`<path d="M${x - 2} 55l4 4M${x + 2} 55l-4 4" stroke="${MAGENTA}" fill="none"/>`);
    });
    threes.forEach(([x, y]) => out.push(text(x, y, '3', 'three')));

    // pane frames
    out.push(line(0, 628.5, 1645, 628.5, AXIS));
    out.push(line(0, 967.5, 1696, 967.5, AXIS));
    out.push(line(0, 982.5, 1696, 982.5, AXIS));
    out.push(line(1644.5, 23, 1644.5, 628, AXIS));
    out.push(`<rect x="1646" y="629" width="49" height="338" fill="none" stroke="${AXIS}" stroke-width="2"/>`);

    // price axis
    priceAxis.forEach(([y, label], i) => {
        out.push(line(1645, y + 0.5, 1650, y + 0.5, AXIS));
        if (i < priceAxis.length - 1) out.push(line(1645, y + 40.5, 1648, y + 40.5, AXIS));
        out.push(text(1692, y + 4, label, 'axis-text'));
    });
    volAxis.forEach(([y, label]) => {
        out.push(line(1647, y + 0.5, 1650, y + 0.5, AXIS));
        out.push(line(1647, y + 24.5, 1649, y + 24.5, AXIS));
        out.push(text(1692, y + 4, label, 'axis-text'));
    });
    out.push(`<path d="M1623 28l4 5-4 5-4-5zM1632.500 28.500h9v10h-9zM1637 28v10" fill="none" stroke="#d00000"/>`);
    out.push(`<rect x="1645.500" y="953.500" width="26" height="13" fill="#000" stroke="${AXIS}"/>`);
    out.push(text(1648, 964, 'X10', 'date-text'));

    // crosshair
    out.push(line(0, 574.5, 1645, 574.5, '#c8c8c8'));
    out.push(line(1311.5, 40, 1311.5, 628, '#c8c8c8'));
    out.push(line(1311.5, 644, 1311.5, 967, '#c8c8c8'));
    out.push(`<rect x="1645.500" y="558.500" width="49" height="16" fill="#000080" stroke="${AXIS}"/>`);
    out.push(`<text x="1647" y="571" fill="#fff">10.99</text>`);

    // date axis
    dateTicks.forEach(x => out.push(line(x + 0.5, 967, x + 0.5, 970, AXIS)));
    dateLabels.forEach(([x]) => out.push(line(x - 1.5, 967, x - 1.5, 983, AXIS)));
    out.push(text(7, 979, '2018年', 'date-text'));
    dateLabels.forEach(([x, label]) => out.push(text(x, 979, label, 'date-text')));
    out.push(`<rect x="1312" y="968" width="77" height="14" fill="#000080"/>`);
    out.push(text(1313, 979, '2018/07/02/—'));
    out.push(line(1389.5, 967, 1389.5, 983, AXIS));
    out.push(line(1645.5, 967, 1645.5, 983, AXIS));
    out.push(text(1657, 979, '日线'));

    // titles and annotations
    out.push(text(2, 37, '台基股份(日线)'));
    out.push(text(2, 642, '假阴线公式(5,10)'));
    out.push(text(98, 642, 'VVOL: -'));
    out.push(text(148, 642, 'VOLUME: 71792.79', 'vol-title'));
    out.push(text(816, 67, '←23.92'));
    out.push(text(1238, 610, '←10.21'));
    out.push(text(1380, 391, '调整至涨停板开盘价附近', 'note'));

    // flags above the pane line
    out.push(`<rect x="101" y="616" width="13" height="11" fill="#007000"/>`);
    out.push(text(107.5, 625, '跌', 'flag'));
    out.push(text(840, 627, 'S', 'flag-s'));
    out.push(`<rect x="898" y="616" width="13" height="11" fill="#007000"/>`);
    out.push(text(904.5, 625, '减', 'flag'));
    out.push(`<rect x="1449" y="616" width="13" height="11" fill="#804000"/>`);
    out.push(text(1455.5, 625, '榜', 'flag'));

    document.getElementById('chart').innerHTML = out.join('');
}

drawChart();
```
